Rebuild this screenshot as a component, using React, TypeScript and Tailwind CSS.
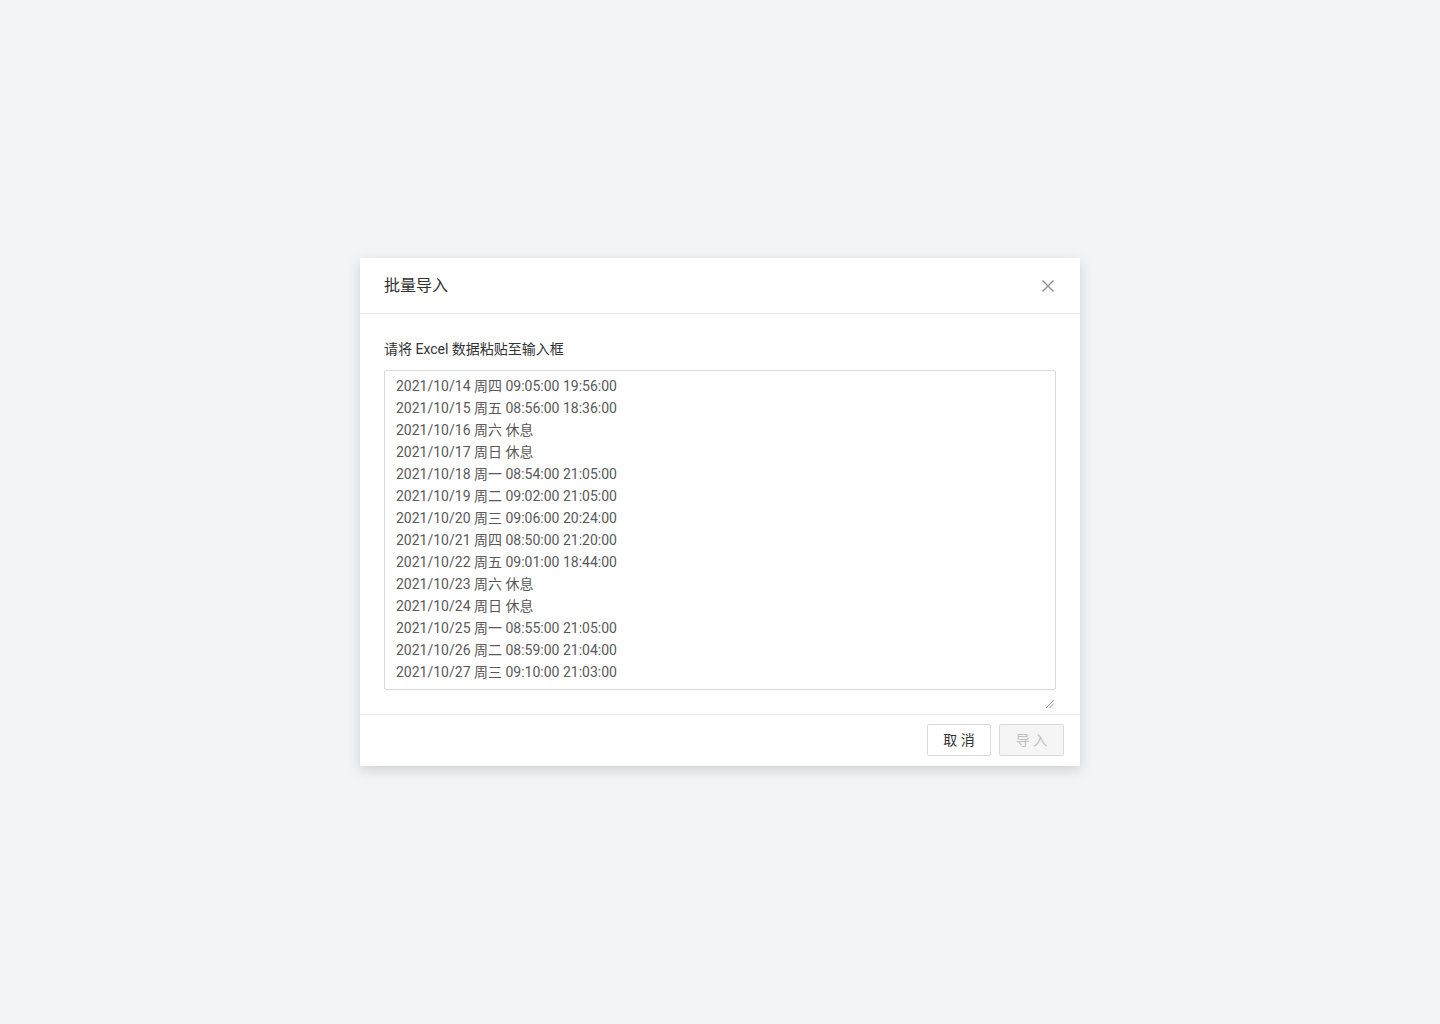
import React from "react";

const lines = [
  "2021/10/14 周四 09:05:00 19:56:00",
  "2021/10/15 周五 08:56:00 18:36:00",
  "2021/10/16 周六 休息",
  "2021/10/17 周日 休息",
  "2021/10/18 周一 08:54:00 21:05:00",
  "2021/10/19 周二 09:02:00 21:05:00",
  "2021/10/20 周三 09:06:00 20:24:00",
  "2021/10/21 周四 08:50:00 21:20:00",
  "2021/10/22 周五 09:01:00 18:44:00",
  "2021/10/23 周六 休息",
  "2021/10/24 周日 休息",
  "2021/10/25 周一 08:55:00 21:05:00",
  "2021/10/26 周二 08:59:00 21:04:00",
  "2021/10/27 周三 09:10:00 21:03:00",
];

export default function App() {
  return (
    <div
      className="w-[1440px] h-[1024px] bg-[#f2f5f8] flex justify-center pt-[258px]"
      style={{ fontFamily: "Roboto, 'Noto Sans CJK SC', sans-serif" }}
    >
      <div className="w-[720px] h-[508px] bg-white shadow-[0_4px_12px_rgba(0,0,0,0.15)] flex flex-col">
        <div className="h-[56px] border-b border-[#e8e8e8] flex items-center justify-between pl-[24px] pr-[25px]">
          <span className="text-[16px] text-[#333333]">批量导入</span>
          <svg width="14" height="14" viewBox="0 0 14 14" className="text-[#8c8c8c]">
            <path d="M1.5 1.5 L12.5 12.5 M12.5 1.5 L1.5 12.5" stroke="currentColor" strokeWidth="1.3" fill="none" />
          </svg>
        </div>
        <div className="flex-1 px-[24px] pt-[24px] flex flex-col">
          <div className="text-[14px] leading-[22px] text-[#333333]">请将 Excel 数据粘贴至输入框</div>
          <div className="mt-[10px] h-[320px] border border-[#d9d9d9] rounded-[2px] pl-[11px] pt-[4px] overflow-hidden">
            {lines.map((l, i) => (
              <div key={i} className="text-[14px] leading-[22px] text-[#595959] whitespace-pre">
                {l}
              </div>
            ))}
          </div>
          <div className="flex justify-end pt-[8px] pr-[1px]">
            <svg width="11" height="11" viewBox="0 0 11 11">
              <path d="M10 2 L2 10 M10 5.5 L5.5 10" stroke="#9a9a9a" strokeWidth="1" fill="none" />
            </svg>
          </div>
        </div>
        <div className="h-[52px] border-t border-[#e8e8e8] flex items-start justify-end gap-[8px] pr-[16px] pt-[9px]">
          <button className="h-[32px] w-[64px] border border-[#d9d9d9] rounded-[2px] bg-white text-[14px] text-[#333333]">
            取 消
          </button>
          <button className="h-[32px] w-[65px] border border-[#d9d9d9] rounded-[2px] bg-[#f5f5f5] text-[14px] text-[#bfbfbf]">
            导 入
          </button>
        </div>
      </div>
    </div>
  );
}
